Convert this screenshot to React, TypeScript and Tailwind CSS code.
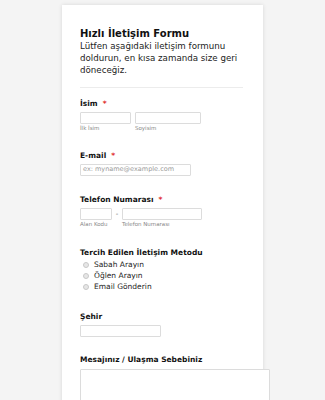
import React from "react";

const Label = ({ text, required }: { text: string; required?: boolean }) => (
  <div className="h-[10px] leading-[10px] text-[7.5px] font-bold text-[#111]">
    {text}
    {required && <span className="ml-[5px] text-[#e02b2b]">*</span>}
  </div>
);

const Input = ({ className, placeholder }: { className: string; placeholder?: string }) => (
  <div
    className={
      "h-[12px] border border-[#dcdcdc] rounded-[1px] bg-white flex items-center px-[2px] text-[6.5px] text-[#999] " +
      className
    }
  >
    {placeholder}
  </div>
);

const Sub = ({ text, className }: { text: string; className?: string }) => (
  <div className={"h-[7px] leading-[7px] mt-[1px] text-[5.5px] text-[#888] " + (className ?? "")}>
    {text}
  </div>
);

const Radio = ({ text }: { text: string }) => (
  <div className="h-[11px] flex items-center">
    <span className="ml-[3px] w-[6px] h-[6px] rounded-full border border-[#c8c8c8] bg-[#e6e6e6]" />
    <span className="ml-[5px] text-[7.5px] text-[#222] leading-[11px]">{text}</span>
  </div>
);

export default function App() {
  return (
    <div
      className="w-[325px] h-[400px] overflow-hidden bg-[#f4f4f4]"
      style={{ fontFamily: '"DejaVu Sans", Verdana, sans-serif' }}
    >
      <div className="mx-auto mt-[5px] w-[201px] min-h-[400px] bg-white shadow-[0_0_4px_rgba(0,0,0,0.12)] pt-[22px] pl-[18px] pr-[20px]">
        <h1 className="text-[10px] leading-[13px] font-bold text-[#111]">Hızlı İletişim Formu</h1>
        <p className="text-[8.7px] leading-[12px] text-[#222]">
          Lütfen aşağıdaki iletişim formunu doldurun, en kısa zamanda size geri döneceğiz.
        </p>
        <div className="mt-[11px] h-px bg-[#ececec]" />

        <div className="mt-[11px]">
          <Label text="İsim" required />
          <div className="mt-[3px] flex gap-[4px]">
            <div>
              <Input className="w-[51px]" />
              <Sub text="İlk İsim" />
            </div>
            <div>
              <Input className="w-[66px]" />
              <Sub text="Soyisim" />
            </div>
          </div>
        </div>

        <div className="mt-[19px]">
          <Label text="E-mail" required />
          <Input className="mt-[3px] w-[111px]" placeholder="ex: myname@example.com" />
        </div>

        <div className="mt-[19px]">
          <Label text="Telefon Numarası" required />
          <div className="mt-[3px] flex">
            <div>
              <Input className="w-[32px]" />
              <Sub text="Alan Kodu" />
            </div>
            <div className="w-[10px] h-[12px] flex items-center justify-center text-[7px] text-[#666]">-</div>
            <div>
              <Input className="w-[80px]" />
              <Sub text="Telefon Numarası" />
            </div>
          </div>
        </div>

        <div className="mt-[20px]">
          <Label text="Tercih Edilen İletişim Metodu" />
          <div className="mt-[1px]">
            <Radio text="Sabah Arayın" />
            <Radio text="Öğlen Arayın" />
            <Radio text="Email Gönderin" />
          </div>
        </div>

        <div className="mt-[20px]">
          <Label text="Şehir" />
          <Input className="mt-[3px] w-[81px]" />
        </div>

        <div className="mt-[18px]">
          <Label text="Mesajınız / Ulaşma Sebebiniz" />
          <div className="mt-[4px] w-[190px] h-[60px] border border-[#dcdcdc] rounded-[1px] bg-white" />
        </div>
      </div>
    </div>
  );
}
